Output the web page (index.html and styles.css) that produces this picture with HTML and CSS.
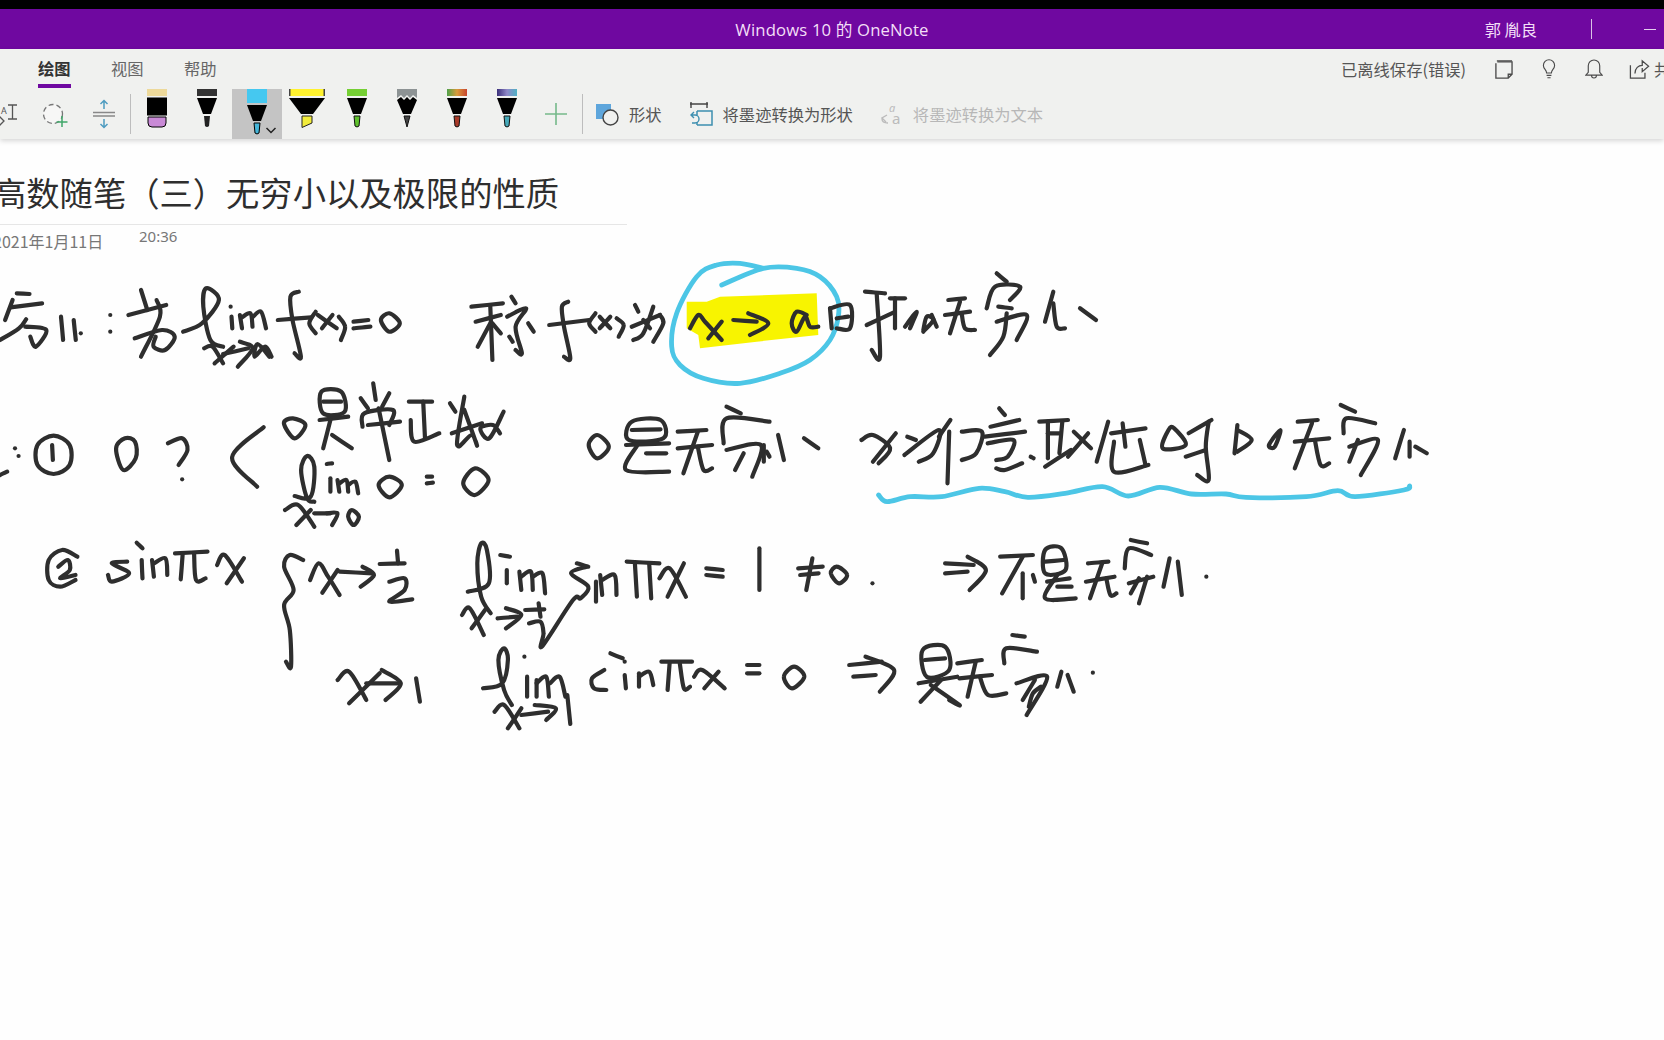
FILE: index.html
```html
<!DOCTYPE html>
<html lang="zh-CN">
<head>
<meta charset="utf-8">
<title>Windows 10 的 OneNote</title>
<link rel="stylesheet" href="styles.css">
</head>
<body>
<div class="app">
  <div class="topedge"></div>
  <header class="titlebar">
    <div></div>
    <div class="apptitle">Windows 10 的 OneNote</div>
    <div class="account">
      <span class="username">郭 胤良</span>
      <span class="tbsep"></span>
      <span class="minimize"></span>
    </div>
  </header>
  <section class="ribbon">
    <div class="tabrow">
      <nav class="tabs">
        <span class="tab active">绘图</span>
        <span class="tab">视图</span>
        <span class="tab">帮助</span>
      </nav>
      <div class="status">
        <span class="savestate">已离线保存(错误)</span>
        <svg class="ic note" viewBox="0 0 20 20"><path d="M2 3.500V19H15L19 15V2H3.500"/><path d="M3 1H19M15 19V15H19"/></svg>
        <svg class="ic bulb" viewBox="0 0 20 24"><path d="M7 17C7 13 3 12 3 7.500A7 7 0 0 1 17 7.500C17 12 13 13 13 17ZM7 20H13M8 23H12"/></svg>
        <svg class="ic bell" viewBox="0 0 22 24"><path d="M1 19.500H21L18 16V8A7 7 0 0 0 4 8V16ZM8 20A3 3 0 0 0 14 20"/></svg>
        <svg class="ic share" viewBox="0 0 22 22"><path d="M1 7V21H17V15M6 16C6 10 10 7 14 7V2L21 8L14 14V10"/></svg>
        <span class="sharetext">共享</span>
      </div>
    </div>
    <div class="toolrow">
      <div class="tool tool-ai">
        <svg viewBox="0 0 28 30" class="iconsvg"><text x="1" y="15" class="aitext">A</text><path class="ibeam" d="M8 6H17M12.500 6V20M8 20H17"/><path class="ibeam" d="M-2 16L4 22L-2 28"/></svg>
      </div>
      <div class="tool tool-lasso">
        <svg viewBox="0 0 50 50" class="iconsvg50"><circle class="lasso" cx="25" cy="25" r="9.500"/><path class="greenplus" d="M34 27V38M28.500 33H39.500"/></svg>
      </div>
      <div class="tool tool-space">
        <svg viewBox="0 0 52 50" class="iconsvg52"><path class="spacelines" d="M15 23.500H37M15 27H37"/><path class="spacearrow" d="M26 20V12M22.500 15L26 11.500L29.500 15M26 30V38M22.500 35L26 38.500L29.500 35"/></svg>
      </div>
      <span class="rsep"></span>
      <div class="pen">
        <svg viewBox="0 0 50 50"><rect x="15" width="20" height="7" fill="#edd99a"/><rect x="15" y="8.500" width="20" height="18" fill="#000"/><path d="M16 28H34V34Q34 38 30 38H20Q16 38 16 34Z" fill="#c98ad6" stroke="#000"/></svg>
      </div>
      <div class="pen">
        <svg viewBox="0 0 50 50"><rect x="15" width="20" height="7" fill="#333"/><path d="M15 9H35L29 25H21Z"/><path d="M22 27H28L27 37Q25 39 23 37Z" fill="#222"/></svg>
      </div>
      <div class="pen selected">
        <svg viewBox="0 0 50 50"><rect x="15" width="20" height="14" fill="#45c8f0"/><path d="M15 16H35L29 32H21Z"/><path d="M22 34H28L27 44Q25 46 23 44Z" fill="#45b5d8" stroke="#000"/><path class="chev" d="M34.500 39L39 43.500L43.500 39"/></svg>
      </div>
      <div class="pen">
        <svg viewBox="0 0 50 50"><rect x="7" width="36" height="7" fill="#fff22e"/><rect x="7" width="1.500" height="7" fill="#444"/><rect x="41.500" width="1.500" height="7" fill="#444"/><path d="M7 9H43L31 25H19Z"/><path d="M20 27H30V34L20 38.500Z" fill="#f2ec3c" stroke="#222"/></svg>
      </div>
      <div class="pen">
        <svg viewBox="0 0 50 50"><rect x="15" width="20" height="7" fill="#75cf33"/><path d="M15 9H35L29 25H21Z"/><path d="M22 27H28L27 37Q25 39 23 37Z" fill="#5ec02c" stroke="#111"/></svg>
      </div>
      <div class="pen">
        <svg viewBox="0 0 50 50"><path d="M15 0H35V9L31 6L28 9L25 6L22 9L19 6L15 9Z" fill="#8d9394"/><path d="M15 11L19 8L22 11L25 8L28 11L31 8L35 11L29 25H21Z"/><path d="M22 27H28L25 38Z" fill="#444" stroke="#111"/></svg>
      </div>
      <div class="pen">
        <svg viewBox="0 0 50 50"><defs><linearGradient id="fire"><stop offset="0" stop-color="#4ea24a"/><stop offset=".5" stop-color="#d89a3a"/><stop offset="1" stop-color="#c8452e"/></linearGradient><linearGradient id="galaxy"><stop offset="0" stop-color="#3a2f7a"/><stop offset=".5" stop-color="#8f88c8"/><stop offset="1" stop-color="#4fb0c4"/></linearGradient></defs><rect x="15" width="20" height="7" fill="url(#fire)"/><path d="M15 9H35L29 25H21Z"/><path d="M22 27H28L27 37Q25 39 23 37Z" fill="#a83a28" stroke="#111"/></svg>
      </div>
      <div class="pen">
        <svg viewBox="0 0 50 50"><rect x="15" width="20" height="7" fill="url(#galaxy)"/><path d="M15 9H35L29 25H21Z"/><path d="M22 27H28L27 37Q25 39 23 37Z" fill="#45a8b8" stroke="#111"/></svg>
      </div>
      <div class="tool tool-addpen">
        <svg viewBox="0 0 50 50" class="iconsvg50"><path class="addplus" d="M24 14V36M13 25H35"/></svg>
      </div>
      <span class="rsep"></span>
      <div class="cmd cmd-shape">
        <svg class="cmdicon" viewBox="0 0 24 24"><rect x="1" y="2" width="15" height="15" fill="#5ea6dc"/><circle cx="15.500" cy="15.500" r="7.500" fill="#f0f1ef" stroke="#444" stroke-width="1.400"/></svg>
        <span>形状</span>
      </div>
      <div class="cmd cmd-convert">
        <svg class="cmdicon" viewBox="0 0 24 24"><path d="M1 2H19M2 0V6M18 0V6" fill="none" stroke="#444" stroke-width="1.400"/><path d="M8 9H23V23H8M8 9V13M8 20V23" fill="none" stroke="#3d8fb0" stroke-width="1.500"/><path d="M5 10L2 13L5 16M2 13H6A4 4 0 0 1 6 21H3" fill="none" stroke="#3d8fb0" stroke-width="1.400"/></svg>
        <span>将墨迹转换为形状</span>
      </div>
      <div class="cmd cmd-totext">
        <svg class="cmdicon" viewBox="0 0 24 24"><text x="10" y="10" class="aglyph">a</text><text x="13" y="22" class="aglyph2">a</text><path d="M8 13L3 16L7 20M3 16V17Q3 21 9 21" fill="none" stroke="#bbb" stroke-width="1.300"/></svg>
        <span>将墨迹转换为文本</span>
      </div>
    </div>
  </section>
  <main class="page">
    <div class="pagehead">
      <h1 class="pagetitle">高数随笔（三）无穷小以及极限的性质</h1>
      <div class="meta">
        <span class="date">2021年1月11日</span>
        <span class="time">20:36</span>
      </div>
    </div>
    <svg id="ink" class="ink" viewBox="0 139 1664 901" role="img"><title>无穷小：若 lim(x→a) f(x)=0 称 f(x) 为 x→a 时的无穷小。注：① 0？〈 0是常函数，lim(x→0) 0 = 0 〉 0是无穷小、x为任意取值时的无穷小。② sinπx { x→1/2 lim sinπx = 1 ≠ 0. ⇒ 不是无穷小。 x→1 lim sinπx = 0 ⇒ 是无穷小。</title></svg>
  </main>
</div>
<script src="ink.js"></script>
</body>
</html>
```
FILE: styles.css
```css
* { box-sizing: border-box; }
html, body { margin: 0; padding: 0; height: 100%; overflow: hidden; background: #fefefe; }
body { font-family: "Noto Sans CJK SC", "Noto Sans", sans-serif; }
.app { width: 1664px; height: 1040px; display: flex; flex-direction: column; overflow: hidden; }
.topedge { height: 9px; background: #000; flex: none; }

.titlebar { height: 40px; flex: none; background: #6f08a0; display: grid; grid-template-columns: 1fr auto 1fr; align-items: center; color: #f3dff7; }
.apptitle { font-family: "Open Sans", "Noto Sans CJK SC", sans-serif; font-size: 16.700px; letter-spacing: .15px; }
.account { display: flex; align-items: center; justify-content: flex-start; padding-left: 556px; }
.username { font-size: 16.300px; width: 106px; flex: none; }
.tbsep { width: 1px; height: 20px; background: #d9c2e6; flex: none; }
.minimize { width: 12px; height: 1px; background: #e4d0ee; margin-left: 52px; flex: none; }

.ribbon { height: 90px; flex: none; background: #f0f1ef; box-shadow: 0 2px 5px rgba(0,0,0,.16); position: relative; z-index: 2; }
.tabrow { height: 40px; display: flex; justify-content: space-between; }
.tabs { display: flex; gap: 40px; padding-left: 38px; }
.tab { font-size: 16.300px; height: 39px; line-height: 39px; color: #666; position: relative; width: 33px; white-space: nowrap; }
.tab.active { color: #333; font-weight: 700; border-bottom: 4px solid #6f08a0; }
.status { display: flex; align-items: center; width: 323px; flex: none; overflow: hidden; }
.savestate { font-size: 16.300px; color: #555; width: 153px; flex: none; white-space: nowrap; }
.ic { fill: none; stroke: #4a4a4a; stroke-width: 1.400; flex: none; }
.note { width: 19px; height: 19px; margin-right: 28px; }
.bulb { width: 16px; height: 20px; margin-right: 28px; }
.bell { width: 18px; height: 20px; margin-right: 26px; }
.share { width: 21px; height: 20px; margin-right: 4px; }
.sharetext { font-size: 16.300px; color: #555; white-space: nowrap; flex: none; }

.toolrow { height: 50px; display: flex; align-items: stretch; }
.tool { flex: none; height: 50px; }
.tool-ai { width: 28px; overflow: hidden; }
.tool-lasso { width: 50px; }
.tool-space { width: 52px; }
.tool-addpen { width: 50px; }
.iconsvg { width: 28px; height: 30px; margin-top: 10px; display: block; overflow: hidden; }
.iconsvg50 { width: 50px; height: 50px; display: block; }
.iconsvg52 { width: 52px; height: 50px; display: block; }
.aitext { font-family: "Noto Sans", sans-serif; font-size: 9px; fill: #555; }
.ibeam { fill: none; stroke: #555; stroke-width: 1.300; }
.lasso { fill: #f7f7f6; stroke: #777; stroke-width: 1.300; stroke-dasharray: 5 3; }
.greenplus { fill: none; stroke: #3fa66a; stroke-width: 1.500; }
.spacelines { fill: none; stroke: #888; stroke-width: 1.500; }
.spacearrow { fill: none; stroke: #4e9cc0; stroke-width: 1.500; }
.addplus { fill: none; stroke: #75b98a; stroke-width: 1.600; }
.rsep { flex: none; width: 1px; height: 40px; margin: 5px 1px 0 0; background: #bdbdbd; }
.pen { width: 50px; height: 50px; flex: none; }
.pen svg { width: 50px; height: 50px; display: block; }
.pen.selected { background: #c4c4c4; }
.chev { fill: none; stroke: #222; stroke-width: 1.500; }

.cmd { display: flex; align-items: center; gap: 10px; font-size: 16.300px; color: #555; flex: none; }
.cmd-shape { margin-left: 11px; }
.cmd-convert { margin-left: 27px; }
.cmd-totext { margin-left: 26px; color: #b7b7b7; }
.cmdicon { width: 24px; height: 24px; flex: none; overflow: visible; }
.aglyph { font-family: "Noto Sans", sans-serif; font-style: italic; font-size: 11px; fill: #bbb; }
.aglyph2 { font-family: "Noto Sans", sans-serif; font-size: 15px; fill: #bbb; }

.page { flex: 1; position: relative; background: #fefefe; overflow: hidden; }
.pagehead { width: 634px; margin-left: -7px; padding-top: 29px; }
.pagetitle { margin: 0; font-size: 33.300px; font-weight: 400; line-height: 48px; height: 57px; color: #2e2e2e; border-bottom: 1px solid #e6e6e6; white-space: nowrap; }
.meta { display: flex; align-items: flex-start; color: #777; font-size: 16px; line-height: 24px; margin-top: -1px; }
.date { margin-top: 5px; width: 146px; }
.time { font-family: "Noto Sans", sans-serif; font-size: 15px; }
.ink { position: absolute; left: 0; top: 0; width: 1664px; height: 901px; }
.ink path { fill: none; stroke-linecap: round; stroke-linejoin: round; }
.ink .dark { stroke: #2e2e2e; stroke-width: 4.200; }
.ink .blue { stroke: #4cc6e6; stroke-width: 4.800; }
.ink .hl { fill: #f8f400; stroke: none; }
```
FILE: ink.js
```js
(function () {
  var groups = [
    { o: [0, 160], fx: 2.376, s: [
      "40,400 70,402","25,442 100,430","30,420 12,480","0,540 45,505 62,478","60,500 110,510 85,560 72,530",
      "145,470 150,540","175,480 180,540","192,520","262,465","262,515",
      "305,465 395,435","335,390 350,450","372,420 380,470 335,590","320,535 385,510 415,530 392,570 365,560 370,530",
      "435,515 480,490 520,420 490,385 483,440 500,540 530,560","548,440","550,470 552,505","570,465 575,505","575,472 595,460 600,500","600,472 620,455 632,505",
      "485,565 505,560 530,610","555,560 510,610","530,582 590,565","570,545 600,565 565,620","640,590 612,552 605,590 630,560 645,590",
      "710,395 690,410 695,480 715,590 700,580","660,480 740,472","750,455 735,490 750,520","755,465 800,505","790,465 765,505","805,470 820,500 810,540","840,485 875,480","840,505 880,500","925,460 905,480 925,515 950,490 925,460",
      "1120,440 1195,430","1130,485 1190,465","1165,440 1170,600","1165,490 1135,560","1170,490 1190,520","1215,410 1225,430","1205,470 1250,445 1225,500 1240,580 1225,570","1210,530 1218,545","1255,490 1268,515",
      "1350,425 1335,440 1340,500 1355,595 1340,590","1305,495 1400,480","1415,460 1400,490 1415,515","1425,470 1450,505","1450,470 1425,505","1465,475 1482,495 1470,530"
    ]},
    { o: [640, 240], fx: 3, s: [
      "-25,260 60,225","-15,195 -5,215","40,200 10,280 -20,300","60,225 70,250 40,305","10,240 30,265",
      "150,265 175,225 195,245 245,300","245,245 205,295","280,240 350,245","325,220 385,250 330,285","500,225 470,215 455,250 470,275 495,230 510,260 535,260",
      "570,205 575,265","570,205 630,195 630,265 590,265","590,235 625,230","675,155 735,160","680,255 760,218","710,160 720,350 695,330",
      "765,175 765,265","750,175 795,175","795,260 830,215 810,265","850,275 880,240 860,230 850,270","875,225 890,260",
      "925,180 975,175","915,225 990,215","960,185 930,280","965,220 975,265 1005,270",
      "1070,100 1100,125","1040,205 1065,140 1140,140 1110,180","1070,245 1160,225 1130,300","1100,220 1090,290 1050,345","1075,200 1115,205",
      "1240,155 1215,245","1240,190 1250,260 1275,265","1320,205 1368,240"
    ]},
    { o: [0, 370], fx: 2.8, s: [
      "42,235","52,258","0,315 20,305","150,197 105,225 105,285 150,312 195,285 195,225 150,197","146,225 148,270",
      "350,205 325,235 345,300 380,265 378,215 350,205","470,220 510,205 525,240 500,285","510,328","738,172 650,262 720,350",
      "820,145 795,160 825,205 855,165 820,145","900,65 905,130 965,125 955,65 900,65","905,95 955,95","895,150 975,140","925,150 905,235","930,195 985,235",
      "1045,40 1052,90","1010,85 1030,115","1090,70 1070,110","1015,170 1020,130 1100,120 1090,165","1030,165 1120,155","1060,115 1090,270",
      "1145,95 1210,95","1185,95 1190,205","1150,150 1160,215 1230,190","1260,100 1275,125","1300,80 1280,225 1320,195 1335,225 1300,120","1265,190 1350,160","1410,125 1370,205 1345,175 1380,165 1400,190",
      "825,378 870,380 880,290 860,258 843,300 860,385 880,395","915,282 930,280","925,325 925,365","945,330 950,365","950,340 970,330 975,365","975,345 995,335 1003,370",
      "1090,320 1060,345 1090,382 1125,345 1090,320","1195,320 1210,320","1195,340 1212,338","1330,295 1297,340 1330,375 1368,330 1330,295",
      "798,420 835,405 880,470","870,420 830,465","880,430 925,430","915,430 945,430 930,465","985,420 975,440 990,465 1005,440 985,420"
    ]},
    { o: [560, 390], fx: 1.742, s: [
      "65,135 50,165 65,205 85,170 65,135","125,95 120,150 180,145 175,90 125,95","125,120 175,118","115,165 190,160","135,165 115,240 190,245","150,190 185,190",
      "205,125 255,120","205,175 265,165","240,125 215,250","240,170 250,240 265,235",
      "290,50 315,70","285,160 290,85 365,95","290,180 350,165 335,260","320,190 305,240","355,165 355,215","380,135 390,210","360,185 365,200","425,145 450,175",
      "525,150 545,135 575,175 555,220","585,130 545,215","605,140 620,150","600,195 660,120 650,190 625,215",
      "680,90 660,140","678,125 675,280","700,125 735,125 725,190 700,210","765,55 775,75","750,110 800,90","740,140 810,125","745,160 790,150 780,200 760,210","760,235 775,240 805,220","820,200 825,205",
      "835,95 885,90","850,95 850,205","875,95 870,190","850,130 870,130","845,230 890,180","895,125 925,175","920,130 885,200",
      "955,95 935,215","960,130 1020,115","980,100 985,170","965,155 965,245 1025,225","1010,150 1020,225",
      "1060,120 1050,175 1090,165 1070,115 1060,120","1095,130 1135,90","1130,95 1125,170 1130,270 1110,255","1090,200 1125,180",
      "1180,105 1175,190","1180,120 1205,150 1180,185","1235,165 1255,120 1245,170 1235,165",
      "1285,95 1320,90","1280,155 1340,145","1310,100 1280,235","1315,150 1325,225 1340,220",
      "1360,45 1385,65","1365,130 1370,85 1420,100","1375,170 1425,150 1395,255","1390,150 1375,215","1470,120 1455,205","1480,155 1480,200","1490,170 1510,190"
    ]},
    { o: [20, 520], fx: 2.613, s: [
      "150,110 110,90 75,120 75,180 105,200 145,180","100,140 125,120 130,150 105,175 145,165",
      "280,125 240,130 285,160 240,185 230,165","305,68 320,85","318,120 320,175","345,120 350,170","350,130 380,115 385,165",
      "405,100 490,95","425,105 420,178","455,100 460,180 485,175","515,135 535,105 580,185","585,115 540,190",
      "740,120 705,105 690,140 715,210 690,255 705,330 708,440 695,425",
      "758,180 780,130 805,170 835,225","830,150 790,218","835,155 920,160","895,140 925,165 890,200","985,92 988,130","940,132 1005,130","965,185 1005,175 1005,210 965,245 1025,238",
      "1170,215 1225,190 1220,90 1205,70 1195,130 1205,230 1230,280","1255,105 1280,110","1272,150 1272,190","1305,155 1310,210","1310,170 1335,155 1340,210","1340,170 1365,160 1372,220",
      "1155,285 1175,265 1212,345","1215,270 1180,325","1248,295 1300,290","1270,265 1310,285 1270,325","1355,250 1360,290","1320,270 1370,268",
      "1330,310 1360,305 1368,340 1365,378 1445,240 1465,235 1485,200 1440,160 1480,140","1455,130 1485,140","1505,185 1505,245",
      "830,480 860,455 905,540","940,460 860,550","905,490 990,490","945,450 995,490 955,540","1035,475 1045,545",
      "1210,505 1260,490 1275,420 1265,385 1250,420 1265,510 1285,555","1318,410","1325,470 1325,530","1350,480 1350,530","1350,490 1375,470 1382,530","1385,490 1410,470 1425,530",
      "1240,575 1265,555 1305,625","1310,565 1275,625","1310,585 1380,575","1345,555 1400,565 1375,600","1430,525 1438,612"
    ]},
    { o: [590, 520], fx: 2.45, s: [
      "25,165 30,225","30,180 60,165 65,225","90,125 170,130","110,130 115,230","145,130 150,235",
      "170,175 195,145 235,230","230,130 190,230","285,145 325,150","285,165 325,170","415,85 415,210",
      "510,145 570,140","515,165 560,160","545,115 530,210","605,140 590,160 610,190 630,165 605,140","692,190",
      "870,130 940,135","870,160 925,155","925,110 970,150 930,210","1005,110 1085,105","1060,110 1010,220","1060,160 1060,235","1085,165 1090,185",
      "1115,90 1115,160 1165,150 1155,85 1115,90","1115,125 1160,120","1120,185 1175,175","1145,165 1115,235 1190,235","1145,200 1180,200",
      "1220,130 1270,125","1215,185 1285,170","1255,130 1225,235","1265,175 1275,225 1290,220",
      "1325,60 1365,70","1310,145 1320,85 1375,105","1320,190 1380,170","1365,170 1345,250","1345,175 1325,220","1420,115 1405,200","1440,125 1450,225","1510,170",
      "50,400 80,415","35,450 5,475 10,505 40,510","85,425","85,465 88,505","120,460 120,500","120,470 145,455 155,495",
      "175,425 250,425","195,430 190,510","220,430 230,505 245,500","255,470 275,450 330,505","315,455 280,505","385,435 415,435","385,460 415,460","500,440 475,470 495,505 525,470 500,440",
      "635,435 715,425","645,470 700,465","675,410 745,450 710,515",
      "815,390 825,470 880,450 870,380 815,390","820,420 870,415","805,490 900,470","860,480 810,545","835,495 905,555 880,540",
      "900,430 960,420","905,475 985,465","945,425 925,530","955,470 975,525 1020,520",
      "1035,345 1065,350","1015,430 1020,385 1095,395","1045,490 1120,470 1070,585","1090,480 1060,540","1075,560 1085,520 1105,500","1155,455 1145,500","1170,465 1185,515","1232,458"
    ]}
  ];
  var hlPts = "140,185 200,185 240,170 530,160 535,285 350,305 180,325 175,285 140,265";
  var loop = "245,135 370,85 470,85 540,110 590,170 595,230 570,300 510,360 420,400 300,430 190,415 120,375 95,320 110,220 170,110 230,75 300,70 370,85";
  var wave = "555,315 570,335 610,320 665,320 730,295 775,305 815,322 880,310 945,290 990,318 1045,292 1100,312 1160,312 1195,322 1300,320 1355,302 1385,320 1470,300 1480,288";
  var svg = document.getElementById("ink");

  function pts(str, g) {
    return str.split(" ").map(function (p) {
      var a = p.split(",");
      return [g.o[0] + a[0] / g.fx, g.o[1] + a[1] / 3];
    });
  }
  function smooth(p) {
    if (p.length === 1) return "M" + p[0][0] + " " + p[0][1] + "h.01";
    var n = p.length;
    var closed = n > 3 && p[0][0] === p[n - 1][0] && p[0][1] === p[n - 1][1];
    var d = "M" + p[0][0].toFixed(1) + " " + p[0][1].toFixed(1);
    for (var i = 0; i < n - 1; i++) {
      var a = i > 0 ? p[i - 1] : (closed ? p[n - 2] : p[0]);
      var b = p[i], c = p[i + 1];
      var e = i + 2 < n ? p[i + 2] : (closed ? p[1] : p[n - 1]);
      d += "C" + (b[0] + (c[0] - a[0]) / 6).toFixed(1) + " " + (b[1] + (c[1] - a[1]) / 6).toFixed(1) + " " +
        (c[0] - (e[0] - b[0]) / 6).toFixed(1) + " " + (c[1] - (e[1] - b[1]) / 6).toFixed(1) + " " +
        c[0].toFixed(1) + " " + c[1].toFixed(1);
    }
    return d;
  }
  function add(d, cls) {
    var el = document.createElementNS("http://www.w3.org/2000/svg", "path");
    el.setAttribute("d", d);
    el.setAttribute("class", cls);
    svg.appendChild(el);
  }
  var z5 = groups[1], z7 = groups[3];
  add("M" + pts(hlPts, z5).map(function (q) { return q[0].toFixed(1) + " " + q[1].toFixed(1); }).join("L") + "Z", "hl");
  add(smooth(pts(loop, z5)), "blue");
  add(smooth(pts(wave, z7)), "blue");
  groups.forEach(function (g) {
    g.s.forEach(function (s) { add(smooth(pts(s, g)), "dark"); });
  });
})();
```
